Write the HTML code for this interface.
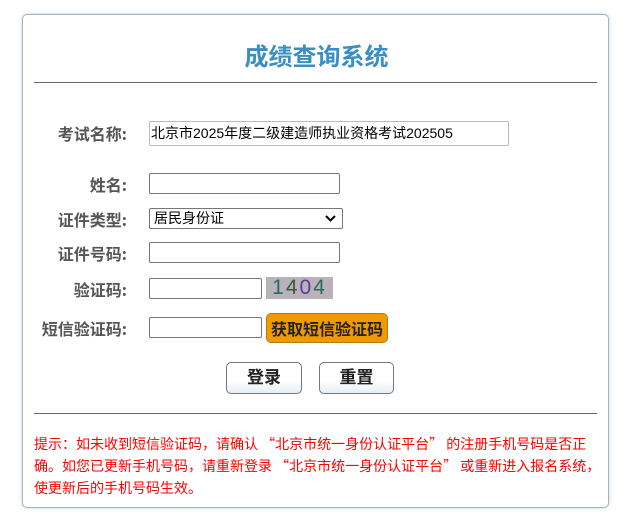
<!DOCTYPE html>
<html><head><meta charset="utf-8"><style>
body{margin:0;background:#fff;width:633px;height:522px;position:relative;font-family:"Liberation Sans","Noto Sans CJK SC",sans-serif;overflow:hidden}
.card{position:absolute;left:22px;top:14px;width:585px;height:492px;border:1px solid #a8b0b8;border-radius:5px;box-shadow:0 0 4px #c9dbe8}
.title{position:absolute;left:0;width:633px;top:37px;text-align:center;font-size:24px;font-weight:bold;color:#3a8fc2}
.hr{position:absolute;left:34px;width:563px;height:1px;background:#666}
.lbl{position:absolute;right:506px;font-size:16px;font-weight:bold;color:#555;white-space:nowrap;font-family:"Noto Sans CJK SC",sans-serif;line-height:20px}
.in{position:absolute;box-sizing:border-box;border:1px solid #777;border-radius:2px;background:#fff}
.btn{position:absolute;box-sizing:border-box;border:1px solid #777;border-radius:5px;background:linear-gradient(#fff,#fff 60%,#e4eef4);font-size:17px;font-weight:bold;text-align:center;color:#222}
.tip{position:absolute;left:34px;top:433px;white-space:nowrap;color:#f00;font-size:14px;line-height:22px;font-family:"Noto Sans CJK SC",sans-serif}
</style></head><body>
<div class="card"></div>
<div class="title">成绩查询系统</div>
<div class="hr" style="top:82px"></div>
<div class="lbl" style="top:123px">考试名称:</div>
<div class="in" style="left:149px;top:121px;width:360px;height:25px;border-color:#bbb;font-size:14px;line-height:23px;padding-left:1px">北京市2025年度二级建造师执业资格考试202505</div>
<div class="lbl" style="top:174px">姓名:</div>
<div class="in" style="left:149px;top:173px;width:191px;height:21px"></div>
<div class="lbl" style="top:209px">证件类型:</div>
<div class="in" style="left:149px;top:208px;width:194px;height:21px;font-size:14px;line-height:19px;padding-left:4px">居民身份证<svg style="position:absolute;right:6px;top:6px" width="11" height="7" viewBox="0 0 11 7"><path d="M1 1L5.5 5.5L10 1" stroke="#000" stroke-width="2" fill="none"/></svg></div>
<div class="lbl" style="top:243px">证件号码:</div>
<div class="in" style="left:149px;top:242px;width:191px;height:21px"></div>
<div class="lbl" style="top:279px">验证码:</div>
<div class="in" style="left:149px;top:278px;width:113px;height:21px"></div>
<div style="position:absolute;left:266px;top:277px;width:67px;height:22px;background:#bab2ba;font-family:'Liberation Sans',sans-serif;font-size:21px;letter-spacing:2px;color:#2a6a60;text-align:center;line-height:22px">1<span style="color:#3a5a40">4</span><span style="color:#5a3a9a">0</span>4</div>
<div class="lbl" style="top:318px">短信验证码:</div>
<div class="in" style="left:149px;top:317px;width:113px;height:21px"></div>
<div class="btn" style="left:266px;top:313px;width:122px;height:30px;background:#f09a00;border-color:#b77a10;line-height:28px;font-size:16px;font-family:'Noto Sans CJK SC',sans-serif">获取短信验证码</div>
<div class="btn" style="left:226px;top:362px;width:76px;height:32px;line-height:30px">登录</div>
<div class="btn" style="left:319px;top:362px;width:75px;height:32px;line-height:30px">重置</div>
<div class="hr" style="top:413px"></div>
<div class="tip">提示：如未收到短信验证码，请确认 “北京市统一身份认证平台” 的注册手机号码是否正<br>确。如您已更新手机号码，请重新登录 “北京市统一身份认证平台” 或重新进入报名系统，<br>使更新后的手机号码生效。</div>
</body></html>
